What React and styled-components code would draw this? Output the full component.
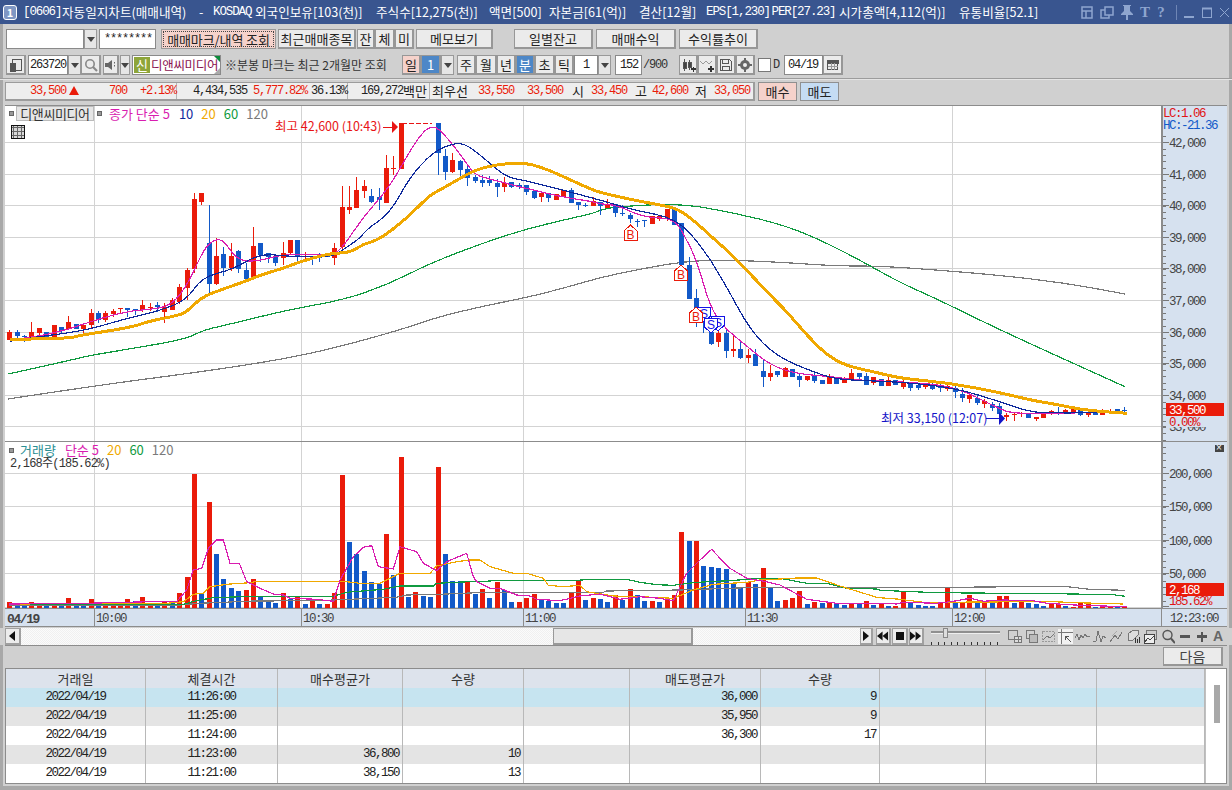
import React from 'react';
import styled, { createGlobalStyle } from 'styled-components';

const KR = `'Noto Sans CJK KR', sans-serif`;
const NUM = `'Liberation Mono', 'Noto Sans CJK KR', monospace`;
const RED = '#ea1b0a';
const BLUE = '#1259c8';

const Global = createGlobalStyle`
  html, body { margin: 0; padding: 0; width: 1232px; height: 790px; overflow: hidden; background: #d0d0d0; }
  * { box-sizing: border-box; }
  svg { display: block; }
`;

/* ---------- chart data (pixel readings) ---------- */
const X = (i) => 9.3 + 7.385 * i;
const A = [
[0,'r',690,696,720,720],[1,'b',690,695,708,718],[2,'b',705,709,712,725],[3,'r',666,696,712,716],[4,'r',684,684,698,712],[5,'b',696,696,720,720],[6,'r',675,675,720,720],[7,'b',682,682,694,698],[8,'r',648,666,688,690],[9,'b',672,672,688,688],
[10,'r',672,676,686,698],[11,'r',628,640,675,685],[12,'b',634,640,660,670],[13,'r',634,640,660,666],[14,'r',628,632,642,650],[15,'r',624,624,628,640],[16,'b',624,624,629,652],[17,'b',627,627,630,645],[18,'r',600,615,630,636],[19,'r',610,622,624,632],
[20,'b',605,615,622,635],[21,'r',610,622,636,668],[22,'r',595,600,629,630],[23,'r',552,561,605,612],[24,'r',505,510,564,600],[25,'r',280,297,508,520],[26,'r',280,280,306,315],[27,'b',315,429,552,588],[28,'r',415,468,553,556],[29,'b',440,462,505,528],
[30,'r',430,468,504,514],[31,'b',450,453,506,518],[32,'b',488,510,537,538],[33,'r',381,438,531,540],[34,'b',429,429,465,485],[35,'b',460,460,472,488],[36,'b',468,468,490,498],[37,'r',426,460,473,494],[38,'r',420,420,458,466],[39,'b',420,420,472,485],
[40,'r',455,468,472,485],[41,'b',468,468,470,494],[42,'b',460,470,472,486],[43,'b',465,465,472,472],[44,'r',428,444,473,495],[45,'r',258,321,442,460],[46,'r',258,321,329,342],[47,'r',232,270,324,324],[48,'r',240,258,272,294],[49,'b',268,288,306,310],
[50,'b',265,291,300,330],[51,'r',165,204,308,308],[52,'r',168,203,206,225],[53,'r',70,70,207,207],[58,'b',70,70,158,225],[59,'b',148,168,216,240],[60,'r',160,180,216,220],[61,'b',180,182,210,235],[62,'b',198,208,234,258],[63,'b',225,231,244,248],
[64,'b',225,240,248,260],[65,'b',228,240,248,258],[66,'b',238,250,261,290],[67,'r',232,250,261,275],[68,'b',245,245,261,265],[69,'b',250,256,260,268],[70,'b',255,255,275,285],[71,'b',273,273,294,298],[72,'r',278,278,292,305],[73,'b',280,280,293,305],
[74,'r',282,282,299,300],[75,'r',270,270,290,290],[76,'b',265,270,308,308],[77,'b',305,305,316,330],[78,'b',308,316,318,322],[79,'r',290,303,317,318],[80,'b',305,305,318,345],[81,'r',298,314,323,323],
];
const B = [
[82,'b',42,42,70,80],[83,'b',45,68,70,78],[84,'b',70,75,88,100],[85,'b',88,92,95,112],[86,'b',90,90,93,110],[87,'r',78,78,102,102],[88,'r',75,78,88,92],[89,'r',57,57,85,92],[90,'b',57,57,105,105],[91,'b',100,100,225,225],
[92,'b',200,225,326,326],[93,'b',298,325,375,412],[94,'b',350,380,400,428],[95,'b',400,425,462,465],[96,'r',410,428,456,472],[97,'b',415,428,482,505],[98,'r',438,477,484,500],[99,'b',453,477,503,507],[100,'r',478,495,503,520],[101,'b',478,492,527,527],
[102,'b',510,544,560,592],[103,'r',525,550,560,572],[104,'b',543,543,555,562],[105,'r',530,534,560,560],[106,'b',537,537,560,560],[107,'b',550,558,569,592],[108,'r',558,558,569,572],[109,'b',545,558,572,578],[110,'b',570,570,583,583],[111,'r',552,560,583,583],
[112,'b',560,568,583,583],[113,'r',560,566,578,578],[114,'r',538,550,570,570],[115,'b',550,550,561,566],[116,'b',548,558,584,584],[117,'r',562,562,578,584],[118,'b',568,568,587,587],[119,'r',562,570,587,587],[120,'b',570,570,584,584],
];
const C = [
[121,'r',380,383,387,389],[122,'b',382,384,388,391],[123,'b',383,385,388,390],[124,'r',384,385,387,389],[125,'b',383,385,389,390],[126,'b',384,386,388,392],[127,'r',383,386,389,391],[128,'b',385,388,392,398],[129,'b',388,394,398,402],[130,'r',392,395,399,403],[131,'b',394,398,403,405],[132,'r',399,401,404,408],[133,'b',402,404,408,411],[134,'b',403,406,414,418],
];
const D = [
[135,'r',100,105,112,122],[136,'r',98,102,104,122],[137,'r',95,100,102,110],[138,'b',100,102,113,115],[139,'r',110,112,116,122],[140,'r',95,97,113,114],[141,'r',90,94,103,104],[142,'b',82,95,103,104],[143,'r',87,91,102,103],[144,'r',85,88,99,100],[145,'b',86,88,106,107],[146,'r',98,100,106,112],[147,'b',95,97,104,106],[148,'r',87,90,104,106],[149,'r',88,92,96,102],[150,'b',87,88,92,98],[151,'b',82,90,94,100],
];
const conv = (arr, base) => arr.map(([i, c, a, b, d, e]) => [i, c, base + a / 3, base + b / 3, base + d / 3, base + e / 3]);
const CANDLES = [...conv(A, 100), ...conv(B, 190), ...C, ...conv(D, 380)];

const VOL = ['r486','b497','b497','r486','r496','b493','r495','b494','r474','b495','b495','r477','b490','r486','r490','r495','r477','b483','r471','r490','b488','r484','b490','r459','r411','r102','b462','r186','b342','b417','b444','b453','r450','r417','b470','b485','b489','r459','b476','r470','b492','r483','b492','r492','r459','r105','b306','b342','b393','b426','b432','r282','b405','r51','b471','r456','b468','b471','r81','b342','b423','b423','r426','b462',
'r447','b474','r426','b450','b486','r486','r474','r462','b478','b483','b489','b489','r459','r420','b480','r474','b477','b486','r465','b480','r447','b465','b483','r483','b486','r477','r465','r276','b302','r302','b378','b381','b384','b387','b429','b441','r426','b432','r384','b444','b483','r480','r474','r453','b492','r486','b489','r486','b490','b495','r491','b491','r483','b495',
'r490','b498','r498','r456','b488','b495','b498','b498','r488','r441','b489','r489','r465','b483','r489','b489','r468','r468','b489','r486','b489','b492','b498','r492','r492','b498','r501','r489','r486','b501','r498','r498','b498','r498'];

const seg = (x0, y0, arr) => arr.map(([x, y]) => [x0 + x / 3, y0 + y / 3]);
const z3 = (a) => seg(0, 100, a);
const z12 = (a) => seg(360, 100, a);
const z4 = (a) => seg(600, 190, a);
const z7 = (a) => seg(1000, 380, a);
const z11 = (a) => seg(880, 100, a);
const v6 = (a) => seg(0, 440, a);
const v8 = (a) => seg(480, 440, a);
const v9 = (a) => seg(880, 440, a);
const P = (...parts) => parts.flat().map(([x, y]) => `${x.toFixed(1)},${y.toFixed(1)}`).join(' ');

const ORANGE = [...z3([[30,718],[205,716],[240,706],[300,697],[400,680],[450,663],[540,645],[560,635],[605,592],[660,570],[720,550],[790,522],[850,505],[900,485],[990,460],[1050,458],[1090,432],[1140,418],[1220,355],[1290,285]]),
  ...z12([[240,270],[300,235],[350,208],[420,192],[490,188],[540,200],[600,225],[680,262]]),
  ...z4([[0,8],[100,30],[180,45],[230,55],[280,90],[340,145],[380,180],[430,230],[520,325],[560,365],[620,435],[680,495],[740,528],[820,545],[900,565]]),
  [950,383], ...z7([[0,38],[100,62],[180,75],[250,90],[380,100]])];
const NAVY = [...z3([[30,724],[100,712],[200,700],[280,685],[380,655],[480,632],[560,600],[605,532],[700,508],[780,460],[870,470],[1000,470],[1030,448],[1080,415]]),
  ...z12([[20,388],[90,340],[150,230],[220,155],[280,130],[320,132],[390,190],[440,232],[490,240],[600,268],[700,295]]),
  ...z4([[0,30],[100,60],[230,85],[310,175],[380,290],[450,420],[530,500],[650,550],[720,570],[900,575]]),
  [955,388], ...z7([[0,65],[70,90],[130,100],[380,97]])];
const MAG = [...z3([[30,720],[100,712],[200,690],[300,655],[400,630],[500,625],[555,570],[610,450],[640,420],[670,418],[710,480],[770,485],[850,462],[1000,465],[1030,440],[1090,350]]),
  ...z12([[90,260],[165,125],[215,70],[260,110],[320,190],[345,225],[400,240],[470,258],[600,290],[700,305]]),
  ...z4([[0,42],[50,45],[130,82],[220,85],[250,130],[290,210],[330,350],[370,410],[430,460],[510,525],[590,552],[700,560],[760,570],[900,575]]),
  [955,386], ...z7([[0,88],[40,100],[130,100],[380,97]])];
const GREEN = [[8,374], ...z3([[215,780],[260,768],[400,745],[555,718],[610,690],[700,670],[860,630],[1030,600],[1160,555],[1290,490],[1440,432]]),
  ...z12([[495,388],[620,358],[700,340]]),
  ...z4([[0,60],[50,50],[240,40],[400,68],[550,105],[650,145],[770,205],[900,278]]),
  [937,299],[1000,330], ...z7([[330,0],[375,20]])];
const GRAY = [[8,399],[100,385],[200,372], ...z3([[835,780],[1000,745],[1200,690],[1300,655],[1440,620]]), [540,295],
  ...z4([[0,262],[150,232],[250,215],[350,210],[520,215],[700,228]]),
  ...z11([[0,498],[170,510],[350,525],[550,548],[735,582]])];

const VMAG = P(v6([[28,492],[260,490],[500,484],[530,485],[560,450],[580,390],[605,385],[625,325],[650,300],[670,300],[690,370],[718,370],[740,425],[780,445],[820,462],[850,465],[870,475],[950,478],[1000,484],[1020,420],[1060,350],[1090,322],[1115,317],[1135,380],[1180,387],[1200,320],[1250,335],[1270,370],[1310,392],[1340,365],[1400,340],[1420,410],[1430,425]]),
  v8([[0,430],[30,445],[60,445],[110,465],[150,468],[170,478],[240,482],[300,468],[360,462],[420,478],[480,470],[540,475],[580,482],[620,400],[660,360],[695,328],[720,355],[750,385],[800,415],[860,425],[900,435],[980,478],[1070,490],[1190,490]]),
  v9([[0,490],[50,492],[70,487],[170,490],[220,484],[270,475],[310,484],[370,480],[460,482],[500,490],[600,496],[740,500]]));
const VORG = P(v6([[28,492],[500,490],[550,485],[580,463],[610,460],[630,440],[680,433],[750,428],[770,424],[990,424],[1040,425],[1080,430],[1140,430],[1200,400],[1290,400],[1310,378],[1370,365],[1410,360],[1430,360]]),
  v8([[0,360],[30,380],[100,400],[140,400],[190,415],[205,436],[250,440],[300,436],[320,455],[400,468],[480,470],[580,475],[640,450],[700,433],[800,427],[840,420],[900,417],[950,414],[1010,414],[1080,438],[1190,472]]),
  v9([[0,473],[60,478],[140,488],[280,486],[520,485],[590,488],[730,492]]));
const VGRN = P(v6([[28,493],[550,493],[590,482],[640,473],[760,469],[1000,469],[1040,457],[1150,448],[1200,438],[1300,438],[1310,430],[1430,424]]),
  v8([[0,425],[40,422],[280,422],[330,418],[440,418],[480,427],[530,434],[580,436],[650,427],[750,422],[840,415],[900,415],[980,430],[1040,430],[1100,445],[1190,447]]),
  v9([[0,451],[170,458],[525,461],[700,464],[735,469]]));
const VGRY = P(v6([[28,497],[540,495],[600,490],[760,483],[950,482],[1020,479],[1190,472],[1220,465],[1320,463],[1430,458]]),
  v8([[0,457],[370,457],[380,453],[600,450],[800,443],[1190,442]]),
  v9([[0,442],[220,442],[550,439],[630,448],[735,451]]));

const smooth = (pts) => {
  let d = `M${pts[0][0].toFixed(1)} ${pts[0][1].toFixed(1)}`;
  for (let i = 1; i < pts.length - 1; i++) {
    const mx = (pts[i][0] + pts[i + 1][0]) / 2;
    const my = (pts[i][1] + pts[i + 1][1]) / 2;
    d += `Q${pts[i][0].toFixed(1)} ${pts[i][1].toFixed(1)} ${mx.toFixed(1)} ${my.toFixed(1)}`;
  }
  const l = pts[pts.length - 1];
  return `${d}L${l[0].toFixed(1)} ${l[1].toFixed(1)}`;
};

const VGRID = [94.5, 301.5, 523.5, 745.5, 952.5];
const PRICE_Y = [142.5, 174.5, 205.5, 237.5, 268.5, 300.5, 332.5, 363.5, 395.5, 426.5];
const PRICE_LABEL = ['42,000','41,000','40,000','39,000','38,000','37,000','36,000','35,000','34,000'];
const VOL_Y = [473.5, 506.5, 540.5, 573.5];
const VOL_LABEL = ['200,000','150,000','100,000','50,000'];

const TITLE = [
  ['[0606]', 39, true], ['자동일지차트(매매내역)', 137], ['-', 14], ['KOSDAQ', 42, true], ['외국인보유[103(천)]', 121], ['주식수[12,275(천)]', 113],
  ['액면[500]', 60], ['자본금[61(억)]', 90], ['결산[12월]', 67], ['EPS[1,230]', 65.5, true], ['PER[27.23]', 67.5, true], ['시가총액[4,112(억)]', 120], ['유통비율[52.1]', 81],
];

/* ---------- styled parts ---------- */
const Win = styled.div`
  width: 1232px; height: 790px; background: #d0d0d0; display: flex; flex-direction: column;
  font-family: ${KR}; color: #222; overflow: hidden; position: relative;
  box-shadow: inset 3px 0 #a8a8a8, inset -3px 0 #a8a8a8, inset 0 -4px #a8a8a8;
`;
const TitleBar = styled.div`
  height: 24px; flex: none; background: #39558f; color: #fff; display: flex; align-items: center; padding-left: 3px;
`;
const TitleBadge = styled.div`
  width: 14px; height: 15px; border: 1px solid #fff; border-radius: 3px; background: #7f97c4; color: #fff;
  font: bold 11px/13px ${KR}; text-align: center;
`;
const TitleText = styled.div`
  margin-left: 6px; width: 1017px; display: flex; flex: none;
`;
const TitleWord = styled.span`
  width: ${(p) => p.$w}px; flex: none; white-space: pre;
  font: ${(p) => (p.$mono ? `12.5px/24px ${NUM}` : `12.6px/24px ${KR}`)};
  letter-spacing: ${(p) => (p.$mono ? -1.1 : 0)}px;
`;
const TitleIcons = styled.div`
  margin-left: 41px; display: flex; align-items: center; color: #8ea5cf;
`;
const TIcon = styled.div`
  width: ${(p) => p.$w}px; margin-left: ${(p) => p.$ml || 0}px; font: bold 15px/15px 'Liberation Serif', serif; text-align: center;
`;
const TSep = styled.div`
  width: 1px; height: 15px; background: #6f86b5; margin-left: 10px;
`;

const Row = styled.div`
  height: 20px; flex: none; display: flex; padding-left: ${(p) => p.$pl ?? 6}px; margin-top: ${(p) => p.$mt}px;
`;
const Btn = styled.div`
  width: ${(p) => p.$w}px; margin-left: ${(p) => p.$ml || 0}px; height: 100%; flex: none;
  border: 1px solid #979797; border-width: 1px 2px 2px 1px; background: ${(p) => p.$bg || '#ebebeb'}; color: ${(p) => p.$c || '#222'};
  font: 13px/17px ${KR}; text-align: center; white-space: pre; overflow: hidden; display: flex; align-items: center; justify-content: center;
`;
const MarkBtn = styled(Btn)`
  background: #f5d2cb; border: 1px solid #9a9a9a; outline: 1px dotted #444; outline-offset: -3px; letter-spacing: -0.1px;
`;
const InputBox = styled.div`
  width: ${(p) => p.$w}px; margin-left: ${(p) => p.$ml || 0}px; flex: none; height: 100%; background: #fff; border: 1px solid #8a8a8a;
  font: 12px/18px ${NUM}; letter-spacing: -1.2px; text-align: ${(p) => p.$a || 'left'}; padding: 0 ${(p) => p.$pad ?? 3}px; color: #222; overflow: hidden;
`;
const Drop = styled.div`
  width: ${(p) => p.$w || 13}px; flex: none; height: 100%; background: #e6e6e6; border: 1px solid #999; display: flex; align-items: center; justify-content: center;
  margin-left: ${(p) => p.$ml || 0}px;
  &::after { content: ''; border: 4px solid transparent; border-top: 5px solid #444; border-bottom: 0; }
`;
const NameBox = styled.div`
  width: 89px; margin-left: 2px; flex: none; height: 100%; border: 1px solid #8a8a8a; background: #fff; display: flex; position: relative; padding: 1px;
  &::after { content: ''; position: absolute; right: 0; top: 0; border: 3px solid transparent; border-top-color: #0c8a3a; border-right-color: #0c8a3a; }
  &::before { content: ''; position: absolute; right: 0; bottom: 0; border: 3px solid transparent; border-bottom-color: #aaa; border-right-color: #aaa; }
`;
const Shin = styled.div`
  width: 16px; flex: none; background: #8ea53a; color: #fff; font: 13px/16px ${KR}; text-align: center;
`;
const StockName = styled.div`
  font: 12.5px/16px ${KR}; color: #8a1250; margin-left: 1px; letter-spacing: -0.3px; white-space: nowrap;
`;
const Note = styled.div`
  margin-left: 4px; width: 162px; flex: none; font: 12px/20px ${KR}; color: #333; white-space: pre;
`;
const Plain = styled.div`
  width: ${(p) => p.$w}px; margin-left: ${(p) => p.$ml || 0}px; flex: none; font: 12px/20px ${NUM}; letter-spacing: -1.2px; color: #333;
`;
const CheckBox = styled.div`
  width: 13px; height: 14px; margin: 3px 0 0 3px; flex: none; background: #fff; border: 1px solid #777;
`;
const Divider = styled.div`
  height: 1px; flex: none; background: #9c9c9c; margin-top: 3px; box-shadow: 0 1px 0 #e4e4e4;
`;
const QuoteRow = styled.div`
  height: 19px; flex: none; margin-top: 3px; display: flex; padding-left: 5px;
`;
const QuoteBox = styled.div`
  width: 750px; flex: none; height: 100%; display: flex; background: #eeeeee; border: 1px solid #9c9c9c; border-width: 1px 2px 2px 1px;
`;
const QCell = styled.div`
  width: ${(p) => p.$w}px; flex: none; display: flex; border-right: 1px solid #b5b5b5; height: 100%;
  &:last-child { border-right: 0; }
`;
const QVal = styled.div`
  width: ${(p) => p.$w}px; flex: none; text-align: right; color: ${(p) => p.$c || '#222'}; font: 12px/16px ${NUM}; letter-spacing: -1.2px; white-space: pre;
`;
const QLabel = styled.div`
  width: ${(p) => p.$w}px; margin-left: ${(p) => p.$ml || 0}px; flex: none; font: 13px/16px ${KR}; color: #222; white-space: pre; text-align: ${(p) => p.$a || 'left'};
`;
const Up = styled.div`
  width: 0; height: 0; flex: none; margin: 3px 0 0 3px; border: 5px solid transparent; border-top: 0; border-bottom: 9px solid ${RED};
`;
const TradeBtn = styled(Btn)`
  border-width: 1px; border-color: #909090;
`;

const ChartFrame = styled.div`
  margin: 4px 5px 0 5px; height: 522px; flex: none; display: flex; flex-direction: column; border-top: 1px solid #8c8c8c; position: relative;
`;
const Pane = styled.div`
  height: ${(p) => p.$h}px; flex: none; display: flex; position: relative; background: #fff; border-bottom: ${(p) => p.$bb || 0}px solid #8c8c8c;
`;
const Plot = styled.svg`
  width: 1156px; height: 100%; flex: none; background: #fff;
`;
const Axis = styled.svg`
  width: 66px; height: 100%; flex: none; background: #d6e1ef; border-left: 2px solid #8c8c8c;
`;
const TimeAxis = styled.svg`
  width: 1222px; height: 19px; flex: none; background: #d6e1ef; border-top: 1px solid #8c8c8c; border-bottom: 1px solid #8c8c8c;
`;
const AxisText = styled.text`
  font: 12.5px ${NUM}; letter-spacing: -1.5px; fill: ${(p) => p.$c || '#444'};
`;
const ChartText = styled.text`
  font: 12.5px ${KR}; fill: ${(p) => p.$c}; white-space: pre;
`;
const BoldDate = styled.text`
  font: bold 13px ${NUM}; letter-spacing: -1.4px; fill: #444;
`;
const MarkText = styled.text`
  font: 12px 'Liberation Sans', sans-serif; fill: ${(p) => p.$c}; text-anchor: middle;
`;

const Legend = styled.div`
  position: absolute; left: 4px; top: ${(p) => p.$t}px; display: flex; align-items: center; font: 13px/14px ${KR}; white-space: pre;
`;
const LegendDot = styled.div`
  width: 5px; height: 5px; background: #999; border: 1px solid #666; flex: none; margin-left: ${(p) => p.$ml || 0}px;
`;
const LegendName = styled.div`
  width: 78px; height: 15px; margin-left: 2px; flex: none; background: #e6e6e6; border: 1px solid #bbb; text-align: center; font: 13px/14px ${KR}; color: #333; letter-spacing: -0.4px;
`;
const LegendText = styled.span`
  color: ${(p) => p.$c}; margin-left: ${(p) => p.$ml || 0}px; flex: none;
`;
const GridIcon = styled.div`
  position: absolute; left: 6px; top: 19px; width: 14px; height: 14px; border: 1px solid #111; background: #d8d8d8;
  background-image: linear-gradient(#666 1px, transparent 1px), linear-gradient(90deg, #666 1px, transparent 1px); background-size: 4px 4px; background-position: 1px 1px;
`;
const SubLegend = styled.div`
  position: absolute; left: 5px; top: 15px; font: 12px/14px ${NUM}; letter-spacing: -0.8px; color: #333; white-space: pre;
`;
const CornerIcon = styled.div`
  position: absolute; right: 3px; top: ${(p) => p.$t}px; width: 9px; height: 7px; background: #444; overflow: hidden;
  &::after { content: '×'; color: #fff; position: absolute; left: 1px; top: -4px; font: 10px/14px 'Liberation Sans', sans-serif; }
`;

const ScrollRow = styled.div`
  height: 17px; margin-top: 1px; flex: none; display: flex; padding-left: 5px; background: #d0d0d0;
`;
const ScrollTrack = styled.div`
  width: 839px; flex: none; position: relative; background: repeating-conic-gradient(#f0f0f0 0 25%, #fbfbfb 0 50%) 0 0 / 2px 2px;
`;
const ScrollThumb = styled.div`
  position: absolute; left: 532px; top: 0; width: 140px; height: 100%; background: #e6e6e6; border: 1px solid #999; border-width: 1px 2px 2px 1px;
`;
const PlayBtn = styled.div`
  width: ${(p) => p.$w}px; margin-left: ${(p) => p.$ml || 0}px; flex: none; height: 100%; background: #ececec; border: 1px solid #a0a0a0; border-width: 1px 2px 2px 1px;
  display: flex; align-items: center; justify-content: center;
`;
const StopMark = styled.div`
  width: 8px; height: 8px; background: #111;
`;
const Slider = styled.div`
  width: 69px; margin-left: 7px; flex: none; position: relative; height: 100%;
`;
const SliderTrack = styled.div`
  position: absolute; left: 0; right: 0; top: 3px; height: 3px; background: #8f8f8f; border-bottom: 1px solid #eee;
`;
const SliderKnob = styled.div`
  position: absolute; left: 12px; top: 0; width: 5px; height: 10px; background: #ddd; border: 1px solid #888;
`;
const SliderTicks = styled.div`
  position: absolute; left: 0; right: 0; bottom: 0; height: 3px;
  background: repeating-linear-gradient(90deg, #333 0 1px, transparent 1px 6.6px);
`;
const ToolIcons = styled.div`
  margin-left: 8px; display: flex; align-items: center; height: 100%;
`;
const ToolIcon = styled.svg`
  width: ${(p) => p.$w}px; height: 15px; flex: none; margin-left: ${(p) => p.$ml || 0}px; background: ${(p) => p.$bg || 'transparent'};
`;
const ToolLetter = styled.div`
  width: 10px; margin-left: 6px; font: bold 14px/15px 'Liberation Sans', sans-serif; color: #666; flex: none; text-align: center;
`;
const Rule = styled.div`
  height: 1px; flex: none; margin: 0 5px; background: #8c8c8c;
`;
const NextRow = styled.div`
  height: 22px; flex: none; display: flex; justify-content: flex-end; padding: 1px 9px 2px 0;
`;
const NextBtn = styled(Btn)`
  color: #444; font-size: 14px;
`;

const TableWrap = styled.div`
  margin: 0 5px; height: 116px; flex: none; display: flex; background: #fff; border: 1px solid #8c8c8c;
`;
const Table = styled.div`
  width: 1199px; flex: none; display: flex; flex-direction: column;
`;
const TRow = styled.div`
  display: grid; grid-template-columns: 140px 132px 125px 121px 106px 131px 119px 106px 111px 108px; height: 19px; flex: none;
  background: ${(p) => p.$bg};
`;
const TCell = styled.div`
  border-right: 1px solid #b8b8b8; font: 12.5px/19px ${NUM}; letter-spacing: -1.5px; color: #222; padding-right: ${(p) => (p.$a === 'center' ? 0 : 3)}px;
  text-align: ${(p) => p.$a || 'right'}; white-space: pre;
`;
const THead = styled.div`
  border-right: 1px solid #b8b8b8; border-bottom: 1px solid #b8b8b8; font: 13px/19px ${KR}; color: #333; text-align: center;
`;
const VScroll = styled.div`
  flex: 1; background: #fff; position: relative; border-left: 1px solid #c0c0c0;
`;
const VThumb = styled.div`
  position: absolute; left: 8px; top: 16px; width: 6px; height: 38px; background: #a8a8a8;
`;

/* ---------- drawings ---------- */
const Candles = () => (
  <g shapeRendering="crispEdges">
    {CANDLES.map(([i, c, wt, bt, bb, wb]) => {
      const x = Math.round(X(i));
      const col = c === 'r' ? RED : BLUE;
      return (
        <g key={i}>
          <rect x={x} y={wt} width={1} height={Math.max(1, wb - wt)} fill={col} />
          <rect x={x - 2} y={bt} width={5} height={Math.max(1, bb - bt)} fill={col} />
        </g>
      );
    })}
  </g>
);
const Line = ({ pts, c, w = 1 }) => <polyline points={pts} fill="none" stroke={c} strokeWidth={w} shapeRendering="crispEdges" />;
const Curve = ({ pts, c, w = 1 }) => <path d={smooth(pts)} fill="none" stroke={c} strokeWidth={w} shapeRendering="crispEdges" />;
const House = ({ x, y, c, t }) => (
  <g>
    <polygon points={`${x - 6.5},${y + 15} ${x + 6.5},${y + 15} ${x + 6.5},${y + 6} ${x},${y} ${x - 6.5},${y + 6}`} fill="#fff" stroke={c} shapeRendering="crispEdges" />
    <MarkText x={x} y={y + 13.5} $c={c}>{t}</MarkText>
  </g>
);
const Pent = ({ x, y, c, t }) => (
  <g>
    <polygon points={`${x - 6.5},${y} ${x + 6.5},${y} ${x + 6.5},${y + 9} ${x},${y + 15} ${x - 6.5},${y + 9}`} fill="#fff" stroke={c} shapeRendering="crispEdges" />
    <MarkText x={x} y={y + 11} $c={c}>{t}</MarkText>
  </g>
);

const PricePlot = () => (
  <Plot viewBox="5 106 1156 335">
    <g stroke="#d3d3d3" shapeRendering="crispEdges">
      {PRICE_Y.map((y) => <line key={y} x1="5" x2="1161" y1={y} y2={y} />)}
      {VGRID.map((x) => <line key={x} x1={x} x2={x} y1="106" y2="441" strokeWidth="1.5" />)}
    </g>
    <Curve pts={GRAY} c="#7a7a7a" w={1.2} />
    <Curve pts={GREEN} c="#109a40" w={1.2} />
    <Candles />
    <Curve pts={MAG} c="#d91db0" w={1.2} />
    <Curve pts={NAVY} c="#0f2a9c" w={1.2} />
    <Curve pts={ORANGE} c="#f0a800" w={3} />
    <House x={630.5} y={225} c={RED} t="B" />
    <House x={681} y={265} c={RED} t="B" />
    <Pent x={718} y={316} c="#1414e6" t="S" />
    <Pent x={704} y={307} c="#1414e6" t="S" />
    <House x={696} y={307} c={RED} t="B" />
    <Pent x={711} y={318} c="#1414e6" t="S" />
    <ChartText x="275" y="131" $c="#e81414">최고 42,600 (10:43)</ChartText>
    <line x1="383" x2="395" y1="127.5" y2="127.5" stroke="#e81414" shapeRendering="crispEdges" />
    <polygon points="392,121 392,133 398,127" fill="#e81414" />
    <line x1="402" x2="432" y1="123.5" y2="123.5" stroke="#e81414" strokeDasharray="5 2" shapeRendering="crispEdges" />
    <ChartText x="881" y="423" $c="#1414c8">최저 33,150 (12:07)</ChartText>
    <line x1="986" x2="1000" y1="418.5" y2="418.5" stroke="#1414c8" shapeRendering="crispEdges" />
    <polygon points="999,412 999,425 1005,418.5" fill="#1414c8" />
  </Plot>
);

const ticks = (ys, step, top, bottom) => {
  const out = [];
  for (let y = ys; y < bottom; y += step) if (y > top) out.push(y);
  return out;
};
const PriceAxis = () => (
  <Axis viewBox="1163 106 64 335">
    <g stroke="#777" shapeRendering="crispEdges">
      {ticks(142.5 - 31.6, 6.32, 133, 440).map((y) => <line key={y} x1="1163" x2="1166" y1={Math.round(y) + 0.5} y2={Math.round(y) + 0.5} />)}
      {PRICE_Y.map((y) => <line key={y} x1="1163" x2="1169" y1={y} y2={y} />)}
    </g>
    <AxisText x="1163" y="117" $c="#e01414">LC:1.06</AxisText>
    <AxisText x="1163" y="129" $c={BLUE}>HC:-21.36</AxisText>
    {PRICE_LABEL.map((t, i) => <AxisText key={t} x="1169" y={PRICE_Y[i] + 4}>{t}</AxisText>)}
    <AxisText x="1169" y="431">33,000</AxisText>
    <rect x="1166" y="416" width="58" height="11" fill="#d6e1ef" shapeRendering="crispEdges" />
    <rect x="1166" y="403" width="58" height="13" fill={RED} shapeRendering="crispEdges" />
    <AxisText x="1169" y="414" $c="#fff">33,500</AxisText>
    <AxisText x="1169" y="426" $c="#e01414">0.00%</AxisText>
  </Axis>
);
const VolPlot = () => (
  <Plot viewBox="5 442 1156 166">
    <g stroke="#d3d3d3" shapeRendering="crispEdges">
      {VOL_Y.map((y) => <line key={y} x1="5" x2="1161" y1={y} y2={y} />)}
      {VGRID.map((x) => <line key={x} x1={x} x2={x} y1="442" y2="608" strokeWidth="1.5" />)}
      <line x1="5" x2="1161" y1="607.5" y2="607.5" />
    </g>
    <g shapeRendering="crispEdges">
      {VOL.map((s, i) => {
        const top = 440 + Number(s.slice(1)) / 3;
        return <rect key={i} x={Math.round(X(i)) - 2} y={top} width={5} height={607.7 - top} fill={s[0] === 'r' ? RED : BLUE} />;
      })}
    </g>
    <Line pts={VGRY} c="#7a7a7a" w={1.2} />
    <Line pts={VGRN} c="#109a40" w={1.2} />
    <Line pts={VORG} c="#f0a800" w={1.2} />
    <Line pts={VMAG} c="#d91db0" w={1.2} />
  </Plot>
);
const VolAxis = () => (
  <Axis viewBox="1163 442 64 166">
    <g stroke="#777" shapeRendering="crispEdges">
      {ticks(473.5 - 33.5, 6.7, 442, 608).map((y) => <line key={y} x1="1163" x2="1166" y1={Math.round(y) + 0.5} y2={Math.round(y) + 0.5} />)}
      {[...VOL_Y, 606.5].map((y) => <line key={y} x1="1163" x2="1169" y1={y} y2={y} />)}
    </g>
    {VOL_LABEL.map((t, i) => <AxisText key={t} x={1169} y={VOL_Y[i] + 4}>{t}</AxisText>)}
    <rect x="1166" y="583" width="58" height="13" fill={RED} shapeRendering="crispEdges" />
    <AxisText x="1169" y="594" $c="#fff">2,168</AxisText>
    <AxisText x="1169" y="605" $c="#e01414">185.62%</AxisText>
  </Axis>
);
const TimeSvg = () => (
  <TimeAxis viewBox="5 608 1222 17">
    <g stroke="#8c8c8c" shapeRendering="crispEdges">
      {[94.5, 301.5, 523.5, 745.5, 952.5, 1161.5].map((x) => <line key={x} x1={x} x2={x} y1="608" y2="625" />)}
    </g>
    <BoldDate x="7" y="622">04/19</BoldDate>
    {[['10:00', 96], ['10:30', 303], ['11:00', 525], ['11:30', 747], ['12:00', 954], ['12:23:00', 1170]].map(([t, x]) => (
      <AxisText key={t} x={x} y="621">{t}</AxisText>
    ))}
  </TimeAxis>
);

const G = ({ children, w = 14, ml, bg }) => (
  <ToolIcon $w={w} $ml={ml} $bg={bg} viewBox={`0 0 ${w} 15`} fill="none" stroke="#777" shapeRendering="crispEdges">{children}</ToolIcon>
);
const Arrow = ({ dir, n = 1 }) => (
  <svg width={n * 6 + 1} height="10" viewBox={`0 0 ${n * 6 + 1} 10`}>
    {Array.from({ length: n }).map((_, i) => (
      <polygon key={i} points={dir === 'l' ? `${i * 6 + 6},0 ${i * 6 + 6},10 ${i * 6},5` : `${i * 6},0 ${i * 6},10 ${i * 6 + 6},5`} fill="#111" />
    ))}
  </svg>
);
const SmallIcon = ({ children, w = 16, h = 14 }) => (
  <svg width={w} height={h} viewBox={`0 0 ${w} ${h}`} fill="none" stroke="#555" shapeRendering="crispEdges">{children}</svg>
);

const rows = [
  ['#c6e4f0', '11:26:00', '', '', '36,000', '9'],
  ['#e4e4e4', '11:25:00', '', '', '35,950', '9'],
  ['#ffffff', '11:24:00', '', '', '36,300', '17'],
  ['#e4e4e4', '11:23:00', '36,800', '10', '', ''],
  ['#ffffff', '11:21:00', '38,150', '13', '', ''],
];
const HEAD = ['거래일', '체결시간', '매수평균가', '수량', '', '매도평균가', '수량', '', '', ''];

export default function App() {
  return (
    <Win>
      <Global />
      <TitleBar>
        <TitleBadge>1</TitleBadge>
        <TitleText>
          {TITLE.map(([t, w, mono]) => <TitleWord key={t} $w={w} $mono={mono}>{t}</TitleWord>)}
        </TitleText>
        <TitleIcons>
          <TIcon $w={13}>
            <svg width="12" height="13" viewBox="0 0 12 13" fill="none" stroke="currentColor" strokeWidth="1.5"><rect x="1" y="1" width="10" height="11" /><path d="M1 5h10M5 5v7" /></svg>
          </TIcon>
          <TIcon $w={14} $ml={6}>
            <svg width="14" height="13" viewBox="0 0 14 13" fill="none" stroke="currentColor" strokeWidth="1.5"><rect x="5" y="1" width="8" height="8" /><path d="M5 4H1v8h8V9" /></svg>
          </TIcon>
          <TIcon $w={12} $ml={7}>
            <svg width="12" height="15" viewBox="0 0 12 15" fill="currentColor"><path d="M2 0h8v1H9v5l3 3v1H7v5H5v-5H0V9l3-3V1H2z" /></svg>
          </TIcon>
          <TIcon $w={10} $ml={7}>T</TIcon>
          <TIcon $w={10} $ml={6}>?</TIcon>
          <TSep />
          <TIcon $w={10} $ml={7}>
            <svg width="10" height="13" viewBox="0 0 10 13" fill="currentColor"><rect y="10" width="10" height="2" /></svg>
          </TIcon>
          <TIcon $w={10} $ml={8}>
            <svg width="10" height="11" viewBox="0 0 10 11" fill="none" stroke="currentColor"><rect x=".5" y="1.5" width="9" height="9" /><path d="M0 1.5h10" strokeWidth="2" /></svg>
          </TIcon>
          <TIcon $w={9} $ml={8}>
            <svg width="9" height="9" viewBox="0 0 9 9" stroke="currentColor"><path d="M0 0l9 9M9 0L0 9" /></svg>
          </TIcon>
        </TitleIcons>
      </TitleBar>

      <Row $mt={5}>
        <InputBox $w={78} />
        <Drop />
        <InputBox $w={57} $ml={2} $pad={4}>********</InputBox>
        <MarkBtn $w={115} $ml={5}>매매마크/내역 조회</MarkBtn>
        <Btn $w={78} $ml={2}>최근매매종목</Btn>
        <Btn $w={18} $ml={1}>잔</Btn>
        <Btn $w={20}>체</Btn>
        <Btn $w={19}>미</Btn>
        <Btn $w={77} $ml={2}>메모보기</Btn>
        <Btn $w={79} $ml={21}>일별잔고</Btn>
        <Btn $w={80} $ml={3}>매매수익</Btn>
        <Btn $w={79} $ml={3}>수익률추이</Btn>
      </Row>

      <Row $mt={6}>
        <Btn $w={20}>
          <SmallIcon w={14} h={14}><rect x="3.5" y="1.5" width="9" height="11" /><rect x="1" y="5" width="5" height="8" fill="#555" /></SmallIcon>
        </Btn>
        <InputBox $w={40} $ml={2} $pad={1}>263720</InputBox>
        <Drop />
        <Btn $w={20}>
          <svg width="14" height="14" viewBox="0 0 14 14" fill="none" stroke="#888" strokeWidth="1.6"><circle cx="6" cy="6" r="4.2" /><path d="M9 9l4 4" strokeWidth="2.2" /></svg>
        </Btn>
        <Btn $w={16} $ml={2}>
          <svg width="12" height="12" viewBox="0 0 12 12" fill="#666"><path d="M0 4h3l4-3v10L3 8H0z" /><rect x="9" y="3" width="1" height="1.5" /><rect x="9" y="6" width="1" height="1.5" /></svg>
        </Btn>
        <Drop $w={10} $ml={1} />
        <NameBox>
          <Shin>신</Shin>
          <StockName>디앤씨미디어</StockName>
        </NameBox>
        <Note>※분봉 마크는 최근 2개월만 조회</Note>
        <Btn $w={19} $ml={15} $bg="#f5d2cb">일</Btn>
        <Btn $w={20} $bg="#4d87c7" $c="#fff">1</Btn>
        <Drop />
        <Btn $w={19} $ml={3}>주</Btn>
        <Btn $w={21}>월</Btn>
        <Btn $w={19}>년</Btn>
        <Btn $w={19} $bg="#4d87c7" $c="#fff">분</Btn>
        <Btn $w={20}>초</Btn>
        <Btn $w={19}>틱</Btn>
        <InputBox $w={24} $a="center">1</InputBox>
        <Drop />
        <InputBox $w={27} $ml={4} $a="right" $pad={3}>152</InputBox>
        <Plain $w={26} $ml={1}>/900</Plain>
        <Btn $w={19} $ml={10}>
          <SmallIcon w={15} h={14}><path d="M3.5 1v12M8.5 2v10" /><rect x="2" y="4" width="3" height="6" fill="#444" /><rect x="7" y="4" width="3" height="5" fill="#444" /><path d="M10 11h5M12.5 9v5" stroke="#333" strokeWidth="1.5" /></SmallIcon>
        </Btn>
        <Btn $w={19}>
          <SmallIcon w={15} h={14}><path d="M0 3l3 3 3-3 3 3 3-3" stroke="#999" /><path d="M8 11h6M11 8v6" stroke="#333" strokeWidth="1.5" /></SmallIcon>
        </Btn>
        <Btn $w={19}>
          <SmallIcon w={14} h={14}><path d="M1.5 1.5h9l2 2v9h-11z" strokeWidth="1.3" /><rect x="3.5" y="1.5" width="6" height="4" /><rect x="3.5" y="8" width="7" height="4.5" /></SmallIcon>
        </Btn>
        <Btn $w={19}>
          <svg width="14" height="14" viewBox="0 0 14 14" fill="#666"><circle cx="7" cy="7" r="5" /><circle cx="7" cy="7" r="2" fill="#eee" /><path d="M6 0h2v3H6zM6 11h2v3H6zM0 6h3v2H0zM11 6h3v2h-3z" /></svg>
        </Btn>
        <CheckBox />
        <Plain $w={9} $ml={2}>D</Plain>
        <InputBox $w={39} $ml={2} $pad={3}>04/19</InputBox>
        <Btn $w={20}>
          <SmallIcon w={13} h={13}><rect x="1.5" y="2.5" width="10" height="9" /><rect x="1" y="2" width="11" height="3" fill="#555" /><path d="M1.5 8h10M5 5v7M8.5 5v7" stroke="#999" /></SmallIcon>
        </Btn>
      </Row>

      <Divider />

      <QuoteRow>
        <QuoteBox>
          <QCell $w={171}>
            <QVal $w={60} $c={RED}>33,500</QVal>
            <Up />
            <QVal $w={48} $c={RED}>700</QVal>
            <QVal $w={49} $c={RED}>+2.13%</QVal>
          </QCell>
          <QCell $w={171}>
            <QVal $w={70}>4,434,535</QVal>
            <QVal $w={60} $c={RED}>5,777.82%</QVal>
            <QVal $w={40}>36.13%</QVal>
          </QCell>
          <QCell $w={82}>
            <QVal $w={55}>169,272</QVal>
            <QLabel $w={24}>백만</QLabel>
          </QCell>
          <QCell $w={324}>
            <QLabel $w={40} $ml={2}>최우선</QLabel>
            <QVal $w={42} $c={RED}>33,550</QVal>
            <QVal $w={49} $c={RED}>33,500</QVal>
            <QLabel $w={12} $ml={9}>시</QLabel>
            <QVal $w={43} $c={RED}>33,450</QVal>
            <QLabel $w={12} $ml={8}>고</QLabel>
            <QVal $w={41} $c={RED}>42,600</QVal>
            <QLabel $w={12} $ml={7}>저</QLabel>
            <QVal $w={43} $c={RED}>33,050</QVal>
          </QCell>
        </QuoteBox>
        <TradeBtn $w={39} $ml={3} $bg="#f5d2cb">매수</TradeBtn>
        <TradeBtn $w={39} $ml={3} $bg="#c5dcf3">매도</TradeBtn>
      </QuoteRow>

      <ChartFrame>
        <Pane $h={336} $bb={1}>
          <PricePlot />
          <PriceAxis />
          <Legend $t={0}>
            <LegendDot />
            <LegendName>디앤씨미디어</LegendName>
            <LegendDot $ml={3} />
            <LegendText $c="#d91db0" $ml={7}>종가 단순 5</LegendText>
            <LegendText $c="#0f2a9c" $ml={9}>10</LegendText>
            <LegendText $c="#f0a800" $ml={8}>20</LegendText>
            <LegendText $c="#109a40" $ml={8}>60</LegendText>
            <LegendText $c="#7a7a7a" $ml={8}>120</LegendText>
          </Legend>
          <GridIcon />
        </Pane>
        <Pane $h={166}>
          <VolPlot />
          <VolAxis />
          <Legend $t={1}>
            <LegendDot />
            <LegendText $c="#2a8f94" $ml={6}>거래량</LegendText>
            <LegendText $c="#d91db0" $ml={9}>단순 5</LegendText>
            <LegendText $c="#f0a800" $ml={8}>20</LegendText>
            <LegendText $c="#109a40" $ml={8}>60</LegendText>
            <LegendText $c="#7a7a7a" $ml={8}>120</LegendText>
          </Legend>
          <SubLegend>2,168주(185.62%)</SubLegend>
          <CornerIcon $t={3} />
        </Pane>
        <TimeSvg />
      </ChartFrame>

      <ScrollRow>
        <PlayBtn $w={16}><Arrow dir="l" /></PlayBtn>
        <ScrollTrack><ScrollThumb /></ScrollTrack>
        <PlayBtn $w={13}><Arrow dir="r" /></PlayBtn>
        <PlayBtn $w={15} $ml={3}><Arrow dir="l" n={2} /></PlayBtn>
        <PlayBtn $w={16} $ml={1}><StopMark /></PlayBtn>
        <PlayBtn $w={15} $ml={1}><Arrow dir="r" n={2} /></PlayBtn>
        <Slider>
          <SliderTrack />
          <SliderKnob />
          <SliderTicks />
        </Slider>
        <ToolIcons>
          <G><rect x=".5" y="1.5" width="9" height="9" /><rect x="6.5" y="7.5" width="7" height="6" fill="#ddd" /><path d="M10 7v7M6 10.5h8" /></G>
          <G ml={4} w={12}><rect x=".5" y="1.5" width="8" height="8" /><rect x="3.5" y="5.5" width="8" height="8" fill="#bbb" /></G>
          <G ml={4} w={13}><path d="M.5 2.5h12v10H.5z" strokeDasharray="2 1" stroke="#999" /><path d="M1 11l4-4 3 2 4-4" /></G>
          <G ml={3} w={15} bg="#f2f2f2"><path d="M3.5 0v15M0 3.5h15" /><path d="M13 13L7 7M7 7v4M7 7h4" stroke="#555" /></G>
          <G ml={2} w={15}><path d="M0 9l2-4 2 6 2-5 2 3 2-4 2 3 3-1" /></G>
          <G ml={3}><path d="M0 12h3l2-10 3 11 2-6 3 2" /></G>
          <G ml={3} w={13}><path d="M0 13l5-7 3 4 4-7" /><path d="M2 7l5-5" stroke="#aaa" /></G>
          <G ml={4} w={13}><path d="M1 5l5-4h5v5l-5 5H1z" fill="#ddd" /><path d="M8 14V9M10 14v-4M12 14V8" stroke="#333" /></G>
          <G ml={4} w={13}><rect x="2.5" y="1.5" width="10" height="9" fill="#ccc" /><rect x=".5" y="5.5" width="10" height="9" fill="#eee" stroke="#444" /><path d="M1 13l3-4 2 2 4-4" stroke="#444" /></G>
          <ToolIcon $w={13} $ml={5} viewBox="0 0 13 15" fill="none" stroke="#555" strokeWidth="1.4"><circle cx="5.5" cy="6" r="4.5" /><path d="M9 9.5l4 4.5" strokeWidth="2" /></ToolIcon>
          <G ml={5} w={10}><path d="M0 7.5h10" strokeWidth="2.4" stroke="#555" /></G>
          <G ml={7} w={10}><path d="M0 7.5h10M5 2.5v10" strokeWidth="2.4" stroke="#555" /></G>
          <ToolLetter>A</ToolLetter>
        </ToolIcons>
      </ScrollRow>
      <Rule />
      <NextRow>
        <NextBtn $w={60}>다음</NextBtn>
      </NextRow>

      <TableWrap>
        <Table>
          <TRow $bg="#dde3ec">
            {HEAD.map((h, i) => <THead key={i}>{h}</THead>)}
          </TRow>
          {rows.map(([bg, time, bp, bq, sp, sq]) => (
            <TRow key={time} $bg={bg}>
              <TCell $a="center">2022/04/19</TCell>
              <TCell $a="center">{time}</TCell>
              <TCell>{bp}</TCell>
              <TCell>{bq}</TCell>
              <TCell />
              <TCell>{sp}</TCell>
              <TCell>{sq}</TCell>
              <TCell />
              <TCell />
              <TCell />
            </TRow>
          ))}
        </Table>
        <VScroll><VThumb /></VScroll>
      </TableWrap>
    </Win>
  );
}
